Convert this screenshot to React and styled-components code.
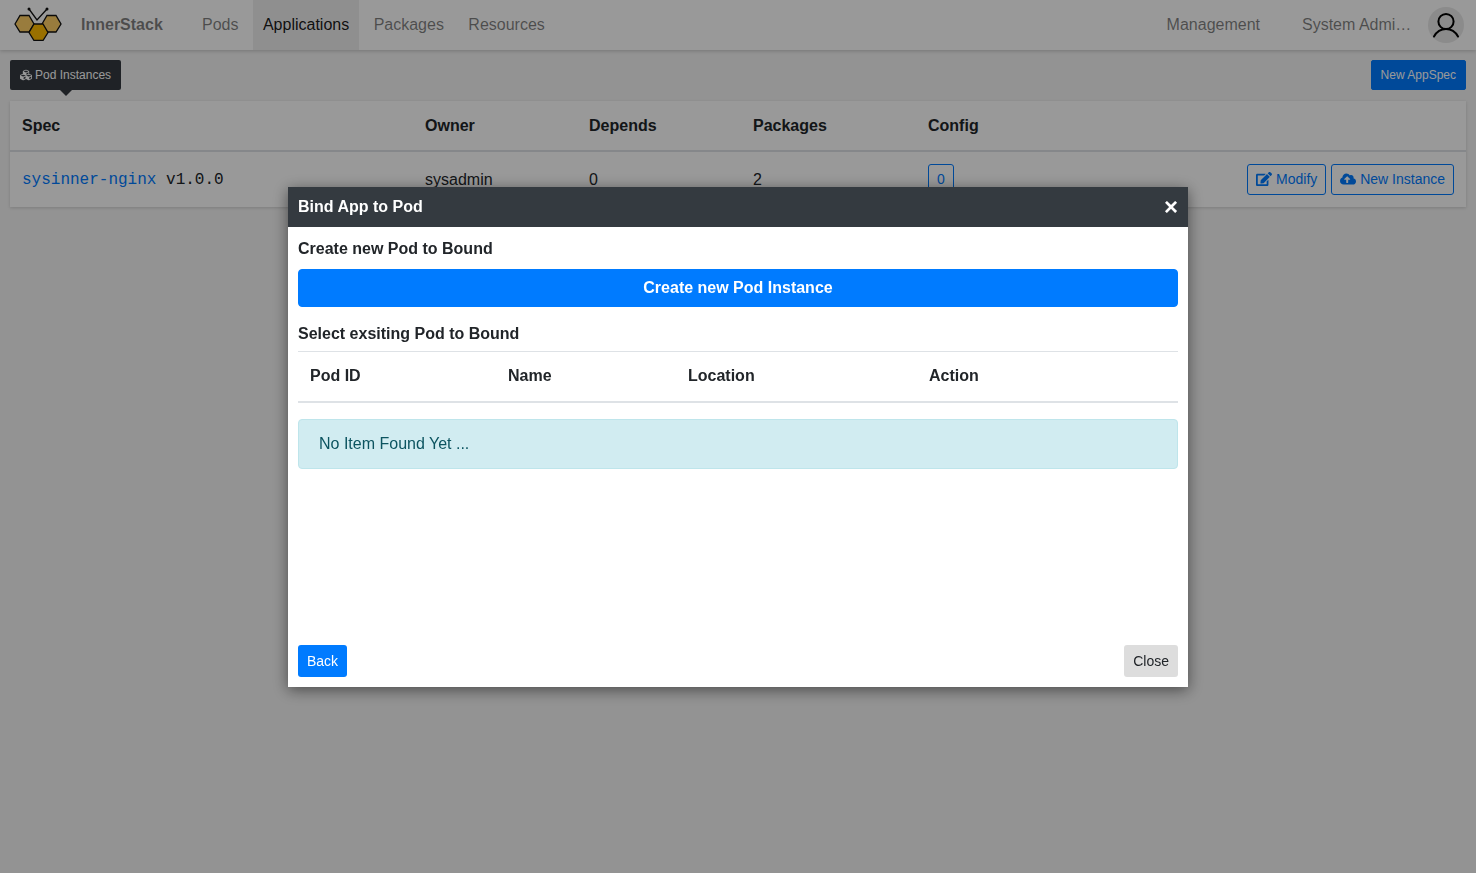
import React from 'react';
import styled, { createGlobalStyle } from 'styled-components';
import { FaCubes, FaEdit, FaCloudUploadAlt } from 'react-icons/fa';

const GlobalStyle = createGlobalStyle`
    html, body {
        margin: 0;
        padding: 0;
        background: #f5f5f5;
    }

    body {
        font-family: "Liberation Sans", Arial, sans-serif;
        font-size: 16px;
        line-height: 24px;
        color: #212529;
    }

    * {
        box-sizing: border-box;
    }
`

const Logo = () => (
    <LogoSvg viewBox="0 0 48 34" width="48" height="34">
        <path d="M15 1 L24 1" fill="none" />
        <polyline points="15,2 23,13 33,2" fill="none" stroke="#111" strokeWidth="1.3" />
        <circle cx="15" cy="2" r="1.5" fill="#111" />
        <circle cx="33" cy="2" r="1.5" fill="#111" />
        <polygon points="1,17 6,8.5 15,8.5 20,17 15,25 6,25" fill="#ffcf66" stroke="#111" strokeWidth="1.3" />
        <polygon points="28,17 33,8.5 42,8.5 47,17 42,25 33,25" fill="#ffcf66" stroke="#111" strokeWidth="1.3" />
        <polygon points="15,25.5 20,17 29,17 34,25.5 29,33.5 20,33.5" fill="#ffbb00" stroke="#111" strokeWidth="1.3" />
    </LogoSvg>
)

const UserIcon = () => (
    <svg viewBox="0 0 36 36" width="36" height="36">
        <circle cx="18" cy="14.5" r="7.6" fill="none" stroke="#000" strokeWidth="2" />
        <path d="M6 29.5 C9 24 13 22 18 22 C23 22 27 24 30 29.5" fill="none" stroke="#000" strokeWidth="2" strokeLinecap="round" />
    </svg>
)

const App = () => {
    return (
        <Page>
            <GlobalStyle />

            <Navbar>
                <Brand>
                    <Logo />
                    <BrandName>InnerStack</BrandName>
                </Brand>

                <NavGroup>
                    <NavItem>Pods</NavItem>
                    <NavItem $active>Applications</NavItem>
                    <NavItem>Packages</NavItem>
                    <NavItem>Resources</NavItem>
                </NavGroup>

                <NavRight>
                    <NavItem>Management</NavItem>
                    <UserName>System Administrator</UserName>
                    <Avatar><UserIcon /></Avatar>
                </NavRight>
            </Navbar>

            <Content>
                <TabBar>
                    <TabPill><FaCubes /> Pod Instances</TabPill>
                    <PrimaryButton>New AppSpec</PrimaryButton>
                </TabBar>

                <Card>
                    <Table>
                        <thead>
                            <tr>
                                <Th $width="403px">Spec</Th>
                                <Th $width="164px">Owner</Th>
                                <Th $width="164px">Depends</Th>
                                <Th $width="175px">Packages</Th>
                                <Th>Config</Th>
                                <Th />
                            </tr>
                        </thead>
                        <tbody>
                            <tr>
                                <Td>
                                    <Mono>
                                        <SpecLink>sysinner-nginx</SpecLink> v1.0.0
                                    </Mono>
                                </Td>
                                <Td>sysadmin</Td>
                                <Td>0</Td>
                                <Td>2</Td>
                                <Td><OutlineButton>0</OutlineButton></Td>
                                <ActionCell>
                                    <OutlineButton><FaEdit /> Modify</OutlineButton>
                                    <OutlineButton><FaCloudUploadAlt /> New Instance</OutlineButton>
                                </ActionCell>
                            </tr>
                        </tbody>
                    </Table>
                </Card>
            </Content>

            <Backdrop>
                <Modal>
                    <ModalHeader>
                        <span>Bind App to Pod</span>
                        <CloseX>×</CloseX>
                    </ModalHeader>

                    <ModalBody>
                        <SectionTitle>Create new Pod to Bound</SectionTitle>
                        <BlockButton>Create new Pod Instance</BlockButton>
                        <SectionTitle>Select exsiting Pod to Bound</SectionTitle>

                        <PodTable>
                            <thead>
                                <tr>
                                    <Th $width="198px">Pod ID</Th>
                                    <Th $width="180px">Name</Th>
                                    <Th $width="241px">Location</Th>
                                    <Th>Action</Th>
                                </tr>
                            </thead>
                        </PodTable>

                        <Alert>No Item Found Yet ...</Alert>
                    </ModalBody>

                    <ModalFooter>
                        <FooterButton $primary>Back</FooterButton>
                        <FooterButton>Close</FooterButton>
                    </ModalFooter>
                </Modal>
            </Backdrop>
        </Page>
    )
}

const Page = styled.div`
    min-height: 100vh;
`

const Navbar = styled.nav`
    height: 50px;
    display: flex;
    align-items: center;
    background: #fff;
    box-shadow: 0 1px 4px rgba(0, 0, 0, .2);
    padding: 0 12px 0 14px;
`

const Brand = styled.div`
    display: flex;
    align-items: center;
    width: 178px;
    height: 100%;
`

const LogoSvg = styled.svg`
    display: block;
    margin-top: -3px;
    flex: none;
`

const BrandName = styled.span`
    margin-left: 19px;
    font-weight: 700;
    color: rgba(0, 0, 0, .5);
`

const NavGroup = styled.div`
    display: flex;
    height: 100%;
    gap: 4.45px;
`

const NavItem = styled.a`
    display: flex;
    align-items: center;
    height: 100%;
    padding: 0 10px;
    color: ${props => props.$active ? 'rgba(0, 0, 0, .9)' : 'rgba(0, 0, 0, .5)'};
    background: ${props => props.$active ? '#eee' : 'transparent'};
`

const NavRight = styled.div`
    display: flex;
    align-items: center;
    height: 100%;
    margin-left: auto;
`

const UserName = styled.span`
    width: 118px;
    margin-left: 32px;
    overflow: hidden;
    white-space: nowrap;
    text-overflow: ellipsis;
    color: rgba(0, 0, 0, .5);
`

const Avatar = styled.div`
    width: 36px;
    height: 36px;
    margin-left: 8px;
    border-radius: 50%;
    background: #e8e8e8;
`

const Content = styled.div`
    padding: 10px;
`

const TabBar = styled.div`
    display: flex;
    justify-content: space-between;
    margin-bottom: 11px;
`

const TabPill = styled.div`
    position: relative;
    display: flex;
    align-items: center;
    gap: 3px;
    height: 30px;
    padding: 0 10px;
    font-size: 12px;
    line-height: 18px;
    color: #fff;
    background: #343a40;
    border-radius: 2px;

    svg {
        font-size: 12px;
    }

    &::after {
        content: "";
        position: absolute;
        left: 50%;
        bottom: -6px;
        margin-left: -6px;
        border-top: 6px solid #343a40;
        border-left: 6px solid transparent;
        border-right: 6px solid transparent;
    }
`

const PrimaryButton = styled.button`
    height: 30px;
    padding: 0 9px;
    font: inherit;
    font-size: 12px;
    color: #fff;
    background: #007bff;
    border: 1px solid #007bff;
    border-radius: 2px;
`

const Card = styled.div`
    background: #fff;
    box-shadow: 0 1px 3px rgba(0, 0, 0, .15);
`

const Table = styled.table`
    width: 100%;
    border-collapse: collapse;
    table-layout: fixed;
`

const Th = styled.th`
    width: ${props => props.$width || 'auto'};
    height: 50px;
    padding: 12px;
    font-weight: 700;
    text-align: left;
    border-bottom: 2px solid #dee2e6;
`

const Td = styled.td`
    padding: 12px;
    vertical-align: middle;
    white-space: nowrap;
`

const ActionCell = styled(Td)`
    text-align: right;
    width: 300px;
    padding-right: 12px;

    button + button {
        margin-left: 5px;
    }
`

const Mono = styled.span`
    font-family: "Liberation Mono", "Courier New", monospace;
`

const SpecLink = styled.a`
    color: #007bff;
`

const OutlineButton = styled.button`
    height: 31px;
    padding: 0 8px;
    font: inherit;
    font-size: 14px;
    line-height: 21px;
    color: #007bff;
    background: transparent;
    border: 1px solid #007bff;
    border-radius: 3px;
    vertical-align: middle;

    svg {
        font-size: 16px;
        vertical-align: -3px;
    }
`

const Backdrop = styled.div`
    position: fixed;
    inset: 0;
    display: flex;
    justify-content: center;
    align-items: flex-start;
    padding-top: 187px;
    background: rgba(0, 0, 0, .4);
`

const Modal = styled.div`
    display: flex;
    flex-direction: column;
    width: 900px;
    height: 500px;
    background: #fff;
    box-shadow: 0 3px 14px rgba(0, 0, 0, .5);
`

const ModalHeader = styled.div`
    display: flex;
    justify-content: space-between;
    align-items: center;
    height: 40px;
    padding: 0 10px;
    font-weight: 700;
    color: #fff;
    background: #343a40;
`

const CloseX = styled.span`
    font-size: 24px;
    line-height: 24px;
    font-weight: 700;
`

const ModalBody = styled.div`
    flex: 1;
    padding: 10px 10px 0;
`

const SectionTitle = styled.div`
    height: 24px;
    margin-bottom: 8px;
    font-weight: 700;
`

const BlockButton = styled.button`
    display: block;
    width: 100%;
    height: 38px;
    margin-bottom: 15px;
    font: inherit;
    font-weight: 700;
    color: #fff;
    background: #007bff;
    border: 1px solid #007bff;
    border-radius: 4px;
`

const PodTable = styled(Table)`
    margin-top: -3px;
    margin-bottom: 16px;
    border-top: 1px solid #dee2e6;
`

const Alert = styled.div`
    height: 50px;
    padding: 12px 20px;
    color: #0c5460;
    background: #d1ecf1;
    border: 1px solid #bee5eb;
    border-radius: 4px;
`

const ModalFooter = styled.div`
    display: flex;
    justify-content: space-between;
    padding: 0 10px 10px;
`

const FooterButton = styled.button`
    height: 32px;
    padding: 0 9px;
    font: inherit;
    font-size: 14px;
    color: ${props => props.$primary ? '#fff' : '#212529'};
    background: ${props => props.$primary ? '#007bff' : '#ddd'};
    border: 0;
    border-radius: 3px;
`

export default App;
